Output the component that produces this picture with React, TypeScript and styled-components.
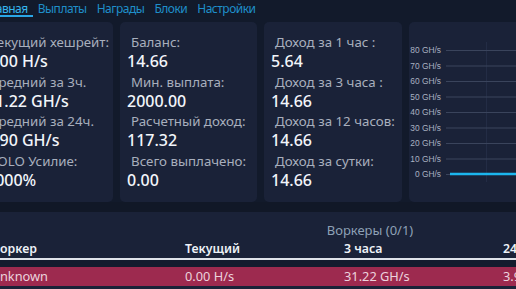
import React from "react";
import styled, { createGlobalStyle } from "styled-components";

const GlobalStyle = createGlobalStyle`
    html, body {
        margin: 0;
        padding: 0;
        background: #121a2b;
        overflow: hidden;
    }
    body {
        font-family: "Noto Sans", "Liberation Sans", sans-serif;
        color: #e6ebf2;
    }
`;

const Page = styled.div`
    width: 820px;
    margin-left: -17px;
`;

const Tabs = styled.nav`
    display: flex;
    height: 18px;
    margin-left: -4px;
    font-size: 12px;
    letter-spacing: -0.5px;
    line-height: 14px;
`;

const Tab = styled.span<{ $active?: boolean }>`
    padding: 2px 5px 0;
    height: 13px;
    color: ${({ $active }) => ($active ? "#35b6ee" : "#1f8fca")};
    border-bottom: 2px solid ${({ $active }) => ($active ? "#2aa6e6" : "transparent")};
`;

const Cards = styled.section`
    display: grid;
    grid-template-columns: 134px 137px 138px 1fr;
    gap: 7px;
    margin: 4px 0 0 -4px;
    height: 180px;
`;

const Card = styled.div`
    background: #1a2238;
    border-radius: 5px;
    padding: 10px 7px 0;
    display: flex;
    flex-direction: column;
    overflow: hidden;
`;

const Label = styled.div`
    font-size: 13.3px;
    line-height: 20px;
    color: #a8afbd;
    padding-left: 4px;
    white-space: nowrap;
`;

const Value = styled.div`
    font-size: 16px;
    line-height: 19.5px;
    font-weight: 500;
    color: #f2f5fa;
    white-space: nowrap;
`;

const ChartCard = styled.div`
    background: #1a2238;
    border-radius: 5px;
    overflow: hidden;
`;

const Band = styled.div`
    height: 10px;
    background: #111827;
`;

const Panel = styled.section`
    background: #1a2238;
    height: 90px;
    padding-top: 9px;
`;

const PanelTitle = styled.div`
    width: 774px;
    text-align: center;
    font-size: 13px;
    line-height: 18px;
    color: #8ea1b6;
`;

const Row = styled.div<{ $head?: boolean }>`
    display: grid;
    grid-template-columns: 193px 159px 159px 159px;
    padding-left: 9px;
    font-size: ${({ $head }) => ($head ? "12.3px" : "12.8px")};
    height: 19px;
    line-height: 19px;
    font-weight: ${({ $head }) => ($head ? 600 : 400)};
    color: ${({ $head }) => ($head ? "#eef2f7" : "#ecd3dd")};
    background: ${({ $head }) => ($head ? "transparent" : "#9d2a4f")};
`;

const Cell = styled.span`
    white-space: nowrap;
`;

const HeadRule = styled.div`
    height: 2px;
    background: #dfe3ea;
`;

const RowGap = styled.div`
    height: 7px;
    background: #141b2e;
`;

const stats = [
    [
        ["Текущий хешрейт:", "0.00 H/s"],
        ["Средний за 3ч.", "31.22 GH/s"],
        ["Средний за 24ч.", "3.90 GH/s"],
        ["SOLO Усилие:", "0000%"],
    ],
    [
        ["Баланс:", "14.66"],
        ["Мин. выплата:", "2000.00"],
        ["Расчетный доход:", "117.32"],
        ["Всего выплачено:", "0.00"],
    ],
    [
        ["Доход за 1 час :", "5.64"],
        ["Доход за 3 часа :", "14.66"],
        ["Доход за 12 часов:", "14.66"],
        ["Доход за сутки:", "14.66"],
    ],
];

const axis = [80, 70, 60, 50, 40, 30, 20, 10, 0];

const HashChart = () => (
    <svg width="400" height="180" style={{ display: "block" }}>
        <line x1="77.5" y1="20" x2="77.5" y2="160" stroke="#232c45" strokeWidth="1" />
        {axis.map((v, i) => {
            const y = 28 + i * 15.5;
            return (
                <g key={v}>
                    <text
                        x="32"
                        y={y + 3}
                        textAnchor="end"
                        fontSize="8.4"
                        fontFamily="Liberation Sans, Arial, sans-serif"
                        fill="#a9b1c1"
                    >
                        {v} GH/s
                    </text>
                    <line x1="37" y1={y + 0.5} x2="400" y2={y + 0.5} stroke="#3a445c" strokeWidth="1" />
                </g>
            );
        })}
        <line x1="41" y1="152" x2="400" y2="152" stroke="#1cb6ee" strokeWidth="2.5" />
    </svg>
);

export default function App() {
    return (
        <Page>
            <GlobalStyle />
            <Tabs>
                <Tab $active>Главная</Tab>
                <Tab>Выплаты</Tab>
                <Tab>Награды</Tab>
                <Tab>Блоки</Tab>
                <Tab>Настройки</Tab>
            </Tabs>
            <Cards>
                {stats.map((card, ci) => (
                    <Card key={ci}>
                        {card.map(([label, value]) => (
                            <React.Fragment key={label}>
                                <Label>{label}</Label>
                                <Value>{value}</Value>
                            </React.Fragment>
                        ))}
                    </Card>
                ))}
                <ChartCard>
                    <HashChart />
                </ChartCard>
            </Cards>
            <Band />
            <Panel>
                <PanelTitle>Воркеры (0/1)</PanelTitle>
                <Row $head>
                    <Cell>Воркер</Cell>
                    <Cell>Текущий</Cell>
                    <Cell>3 часа</Cell>
                    <Cell>24 часа</Cell>
                </Row>
                <HeadRule />
                <RowGap />
                <Row>
                    <Cell>unknown</Cell>
                    <Cell>0.00 H/s</Cell>
                    <Cell>31.22 GH/s</Cell>
                    <Cell>3.90 GH/s</Cell>
                </Row>
            </Panel>
        </Page>
    );
}
